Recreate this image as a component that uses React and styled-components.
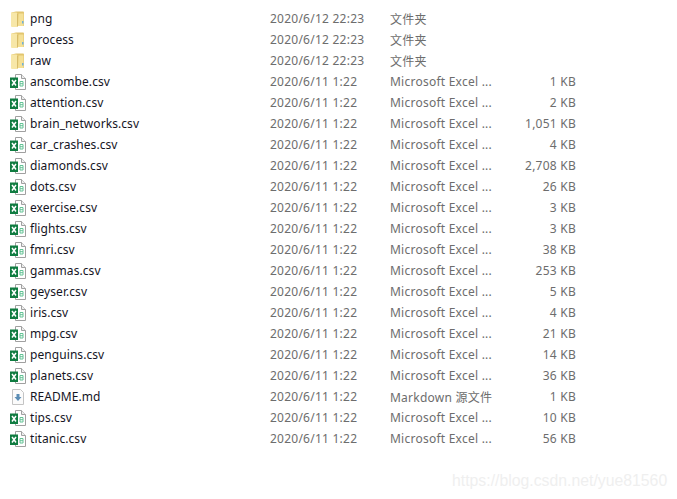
import React from 'react';
import styled, { createGlobalStyle } from 'styled-components';

const GlobalStyle = createGlobalStyle`
  html, body {
    margin: 0;
    background: #ffffff;
  }
`;

const Page = styled.div`
  position: relative;
  width: 677px;
  height: 499px;
  overflow: hidden;
  padding-top: 8px;
  box-sizing: border-box;
  font-family: "Noto Sans", "Noto Sans CJK SC", sans-serif;
  font-size: 12px;
`;

const Row = styled.div`
  display: grid;
  grid-template-columns: 260px 120px 125px 61px;
  height: 21px;
  align-items: center;
  padding-left: 10px;
`;

const Name = styled.div`
  display: flex;
  align-items: center;
  gap: 4px;
  color: #15151f;
  letter-spacing: 0.07px;
`;

const Cell = styled.div`
  color: #6d6d6d;
  white-space: nowrap;
  letter-spacing: 0.24px;
`;

const Size = styled(Cell)`
  text-align: right;
`;

const Watermark = styled.div`
  position: absolute;
  left: 452px;
  top: 472px;
  font-family: "Liberation Sans", sans-serif;
  font-size: 15.8px;
  color: #efefef;
`;

const FolderIcon = () => (
  <svg width="16" height="16" viewBox="0 0 16 16">
    <path d="M1.5 1.5L6 0.5h7.5l.5 1v13.5H7z" fill="#e2c56e" />
    <path d="M1 1.5h5.5l1 1V16H2a1 1 0 0 1-1-1z" fill="#f7e7a8" />
    <path d="M8.5 2.5h5V15h-5.500z" fill="#f4e096" />
    <path d="M7.500 2.500V15.500" stroke="#d8bc68" />
    <path d="M12 10h1.500v2.500H12z" fill="#6fb1d8" />
  </svg>
);

const ExcelIcon = () => (
  <svg width="16" height="16" viewBox="0 0 16 16">
    <path d="M5.500.500h6l4 4v11h-10z" fill="#fff" stroke="#a0a0a0" />
    <path d="M11.500.500v4h4" fill="#eee" stroke="#a0a0a0" />
    <rect x="0" y="3.500" width="8" height="10.500" fill="#107c41" />
    <path d="M2 6l4 5.500M6 6l-4 5.500" stroke="#fff" strokeWidth="1.500" />
    <path d="M10 7.500h3v4.500h-3zM10 9.700h3" fill="none" stroke="#63c294" />
  </svg>
);

const MarkdownIcon = () => (
  <svg width="16" height="16" viewBox="0 0 16 16">
    <path d="M2.500.500h8l3 3v12h-11z" fill="#fbfbfb" stroke="#c4c4c4" />
    <path d="M6.500 5h3v3h2L8 12 4.500 8h2z" fill="#5b8db5" />
  </svg>
);

const icons = { folder: FolderIcon, excel: ExcelIcon, md: MarkdownIcon };

const folderType = '文件夹';
const excelType = 'Microsoft Excel ...';
const newDate = '2020/6/12 22:23';
const oldDate = '2020/6/11 1:22';

const csv = (name, size) => ({ name: `${name}.csv`, icon: 'excel', date: oldDate, type: excelType, size });
const folder = name => ({ name, icon: 'folder', date: newDate, type: folderType, size: '' });

const files = [
  folder('png'),
  folder('process'),
  folder('raw'),
  csv('anscombe', '1 KB'),
  csv('attention', '2 KB'),
  csv('brain_networks', '1,051 KB'),
  csv('car_crashes', '4 KB'),
  csv('diamonds', '2,708 KB'),
  csv('dots', '26 KB'),
  csv('exercise', '3 KB'),
  csv('flights', '3 KB'),
  csv('fmri', '38 KB'),
  csv('gammas', '253 KB'),
  csv('geyser', '5 KB'),
  csv('iris', '4 KB'),
  csv('mpg', '21 KB'),
  csv('penguins', '14 KB'),
  csv('planets', '36 KB'),
  { name: 'README.md', icon: 'md', date: oldDate, type: 'Markdown 源文件', size: '1 KB' },
  csv('tips', '10 KB'),
  csv('titanic', '56 KB'),
];

const App = () => (
  <Page>
    <GlobalStyle />
    {files.map(file => {
      const Icon = icons[file.icon];
      return (
        <Row key={file.name}>
          <Name>
            <Icon />
            {file.name}
          </Name>
          <Cell>{file.date}</Cell>
          <Cell>{file.type}</Cell>
          <Size>{file.size}</Size>
        </Row>
      );
    })}
    <Watermark>https://blog.csdn.net/yue81560</Watermark>
  </Page>
);

export default App;
